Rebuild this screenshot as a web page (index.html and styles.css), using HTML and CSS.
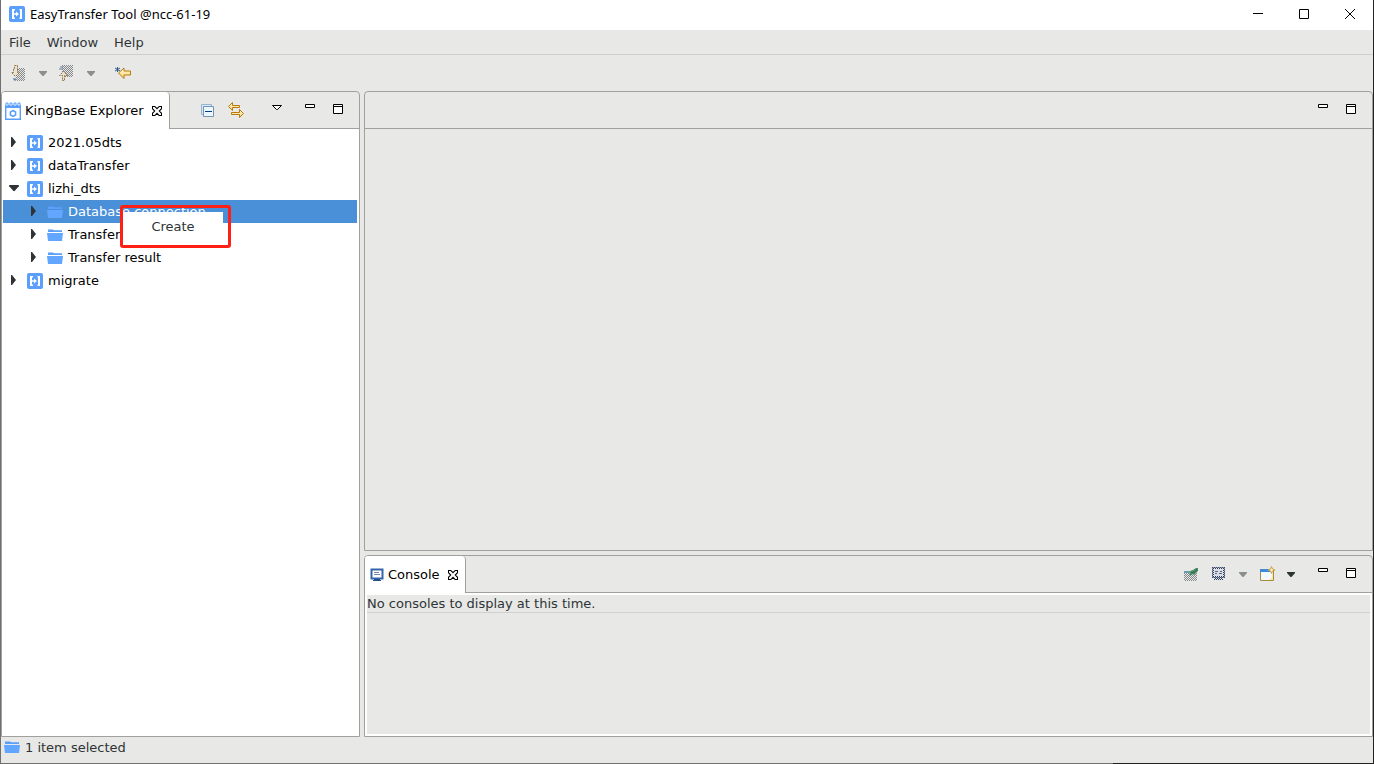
FILE: index.html
```html
<!DOCTYPE html>
<html lang="en">
<head>
<meta charset="utf-8">
<title>EasyTransfer Tool @ncc-61-19</title>
<link rel="stylesheet" href="styles.css">
</head>
<body>
<svg class="defs" aria-hidden="true">
  <defs>
    <pattern id="dither" width="2" height="2" patternUnits="userSpaceOnUse"><path d="M0 0h1v1H0zM1 1h1v1H1z" fill="#85888c"/></pattern>
    <pattern id="dither-navy" width="2" height="2" patternUnits="userSpaceOnUse"><path d="M0 0h1v1H0zM1 1h1v1H1z" fill="#2b3c66"/></pattern>
    <linearGradient id="gold" x2="0" y2="1"><stop stop-color="#fffbe0"/><stop offset="1" stop-color="#ffd466"/></linearGradient>
    <symbol id="app" viewBox="0 0 16 16">
      <rect width="16" height="16" rx="2" fill="#5a9ffb"/>
      <path d="M3 3h3v1.500H5v7h1V13H3zM13 3h-2.500v1.500h.5v7h-.5V13H13z" fill="#fff"/>
      <path d="M5 7.200h2V5.500L10 8l-3 2.500V8.800H5z" fill="#fff"/>
    </symbol>
    <symbol id="folder" viewBox="0 0 16 16">
      <path d="M1 2.500h5l1 .8h8V5H1z" fill="#5a9ffb"/>
      <path d="M0 6h16l-1 8H1z" fill="#62a6ff"/>
    </symbol>
    <symbol id="right" viewBox="0 0 5 10"><path d="M0 0h1l4 5-4 5H0z" fill="#2e3436"/></symbol>
    <symbol id="down" viewBox="0 0 8 5"><path d="M0 0h8v1L4.500 5h-1L0 1z" fill="currentColor"/></symbol>
    <symbol id="x" viewBox="0 0 11 11"><path d="M.5.5h2.500l2.500 2.500L8 .5h2.500V3L8 5.500 10.500 8v2.500H8L5.500 8 3 10.500H.5V8L3 5.500.5 3z" fill="#fff" stroke="#000" stroke-width="1.200"/></symbol>
    <symbol id="min" viewBox="0 0 16 16"><path d="M3.500 2.500h9v3h-9z" fill="#fff" stroke="#000"/></symbol>
    <symbol id="max" viewBox="0 0 16 16"><path d="M3.500 2.500h9v9h-9zM4 4.500h8" fill="#fff" stroke="#000"/></symbol>
    <symbol id="viewmenu" viewBox="0 0 16 16"><path d="M3.500 3.500h9l-4 4h-1z" fill="#fff" stroke="#000"/></symbol>
    <symbol id="explorer" viewBox="0 0 16 18">
      <path d="M.7 5h14.600v12.300H.7z" fill="#fff" stroke="#5a9ffb" stroke-width="1.400"/>
      <path d="M0 3h16v3H0z" fill="#5a9ffb"/>
      <path d="M1 3.500V1h2v3M5 3.500V1h2v3M9 3.500V1h2v3M13 3.500V1h2v3" fill="#fff" stroke="#5a9ffb"/>
      <path d="M8 8.500l2.600 1.500v3L8 14.500 5.400 13v-3z" fill="#fff" stroke="#5a9ffb" stroke-width="1.500"/>
    </symbol>
    <symbol id="collapse" viewBox="0 0 16 16">
      <path d="M1.500 2.500h10v10h-10z" fill="#d8eaf5" stroke="#98b5cf"/>
      <path d="M3.500 4.500h10v10h-10z" fill="#eaf7ff" stroke="#7890b2"/>
      <path d="M5 9.500h7" stroke="#003f86"/>
    </symbol>
    <symbol id="link" viewBox="0 0 16 16">
      <path d="M.5 4.500l4-4v3h7v2h-7v3z" fill="url(#gold)" stroke="#b87912"/>
      <path d="M15.500 11.500l-4-4v3h-8v2h8v3z" fill="url(#gold)" stroke="#b87912"/>
    </symbol>
    <symbol id="nextnote" viewBox="0 0 16 16">
      <path d="M6 3h9v13H6z" fill="url(#dither)"/>
      <path d="M4.500.5h3v7h2l-4 4-4-4h2v-4h1z" fill="#e8e3d6" stroke="#98743c" stroke-dasharray="2 1"/>
      <path d="M3 14h3M4 15h2" stroke="#416a9d"/>
    </symbol>
    <symbol id="prevnote" viewBox="0 0 16 16">
      <path d="M4 0h11v12H4z" fill="url(#dither)"/>
      <path d="M4.500 14.500v-4h-3l4-4 4 4h-3v5h-2z" fill="#e8e3d6" stroke="#98743c" stroke-dasharray="2 1"/>
      <path d="M2 2h3M1 4h4" stroke="#6681a5"/>
    </symbol>
    <symbol id="lastedit" viewBox="0 0 16 16">
      <path d="M3.500 8l5.500-5v3h6.500v4H9v3.500z" fill="url(#gold)" stroke="#b87912"/>
      <path d="M2.500 2v5M0 3l5 3M0 6l5-3" stroke="#315b87"/>
    </symbol>
    <symbol id="console" viewBox="0 0 14 14">
      <path d="M1.500 1.500h11v9h-11z" fill="#fff" stroke="#3564aa" stroke-width="2"/>
      <path d="M4 4.500h5M4 6.500h6" stroke="#7486ab"/>
      <path d="M4 11h6v1h1v1H3v-1h1z" fill="#244f8e"/>
    </symbol>
    <symbol id="pin" viewBox="0 0 16 16">
      <path d="M1 5h13v10H1z" fill="url(#dither)"/>
      <path d="M1 5h8v2H1z" fill="#6b9cad"/>
      <path d="M6 8l2-2-1-1 3-1 3-2h2v3l-2 2-2 2-1-1-3 2z" fill="#4f8867"/>
      <path d="M8 6l3 1 3-4" fill="none" stroke="#28764c"/>
    </symbol>
    <symbol id="display" viewBox="0 0 16 16">
      <path d="M1 1h13v11H1z" fill="url(#dither-navy)"/>
      <path d="M3 3h9v7H3z" fill="#d9dce4"/>
      <path d="M1.500 1.500h12v10h-12z" fill="none" stroke="#4d5b7c" stroke-opacity=".6"/>
      <path d="M4 5.500h3M9 5.500h2M4 7.500h2M8 7.500h3" stroke="#5c6780"/>
      <path d="M3 12h9v2H3z" fill="url(#dither-navy)"/>
    </symbol>
    <symbol id="newconsole" viewBox="0 0 16 16">
      <path d="M1.500 3.500h13v11h-13z" fill="#f1faff" stroke="#aa8a3d"/>
      <path d="M1 3h11v3H1z" fill="#3f8bd6"/>
      <path d="M13 7v3q0 4-5 4h6V7z" fill="#fbe6a0"/>
      <path d="M12.500.5l1 2.500 2.500 1-2.500 1-1 2.500-1-2.500-2.500-1 2.500-1z" fill="#fff0b8" stroke="#c9a04b"/>
    </symbol>
  </defs>
</svg>

<div class="window">
  <header class="titlebar">
    <svg class="icon"><use href="#app"/></svg>
    <h1 class="title">EasyTransfer Tool @ncc-61-19</h1>
    <div class="controls">
      <button class="control" aria-label="Minimize"><svg viewBox="0 0 12 12"><path d="M1 5.500h10"/></svg></button>
      <button class="control" aria-label="Maximize"><svg viewBox="0 0 12 12"><path d="M1.500 1.500h9v9h-9z"/></svg></button>
      <button class="control" aria-label="Close"><svg viewBox="0 0 12 12"><path d="M1 1l10 10M11 1L1 11"/></svg></button>
    </div>
  </header>

  <nav class="menubar" aria-label="Main menu">
    <button>File</button><button>Window</button><button>Help</button>
  </nav>

  <div class="toolbar">
    <div class="split">
      <button aria-label="Next annotation" disabled><svg class="icon"><use href="#nextnote"/></svg></button>
      <button class="muted" aria-label="Next annotation options" disabled><svg class="caret"><use href="#down"/></svg></button>
    </div>
    <div class="split">
      <button aria-label="Previous annotation" disabled><svg class="icon"><use href="#prevnote"/></svg></button>
      <button class="muted" aria-label="Previous annotation options" disabled><svg class="caret"><use href="#down"/></svg></button>
    </div>
    <button class="last-edit" aria-label="Last edit location"><svg class="icon"><use href="#lastedit"/></svg></button>
  </div>

  <main class="workbench">
    <section class="panel explorer" aria-label="KingBase Explorer">
      <div class="panel-head">
        <div class="tab explorer-tab">
          <svg class="explorer-icon"><use href="#explorer"/></svg>
          <h2>KingBase Explorer</h2>
          <button aria-label="Close KingBase Explorer"><svg class="close"><use href="#x"/></svg></button>
        </div>
        <div class="actions">
          <button aria-label="Collapse all"><svg class="icon"><use href="#collapse"/></svg></button>
          <button aria-label="Link with editor"><svg class="icon"><use href="#link"/></svg></button>
          <button class="view-menu" aria-label="View menu"><svg class="icon"><use href="#viewmenu"/></svg></button>
          <span class="sizing">
            <button aria-label="Minimize"><svg class="icon"><use href="#min"/></svg></button>
            <button aria-label="Maximize"><svg class="icon"><use href="#max"/></svg></button>
          </span>
        </div>
      </div>
      <ul class="tree" role="tree">
        <li role="treeitem" aria-expanded="false"><div class="row"><span class="twisty"><svg class="right"><use href="#right"/></svg></span><svg class="icon"><use href="#app"/></svg><span>2021.05dts</span></div></li>
        <li role="treeitem" aria-expanded="false"><div class="row"><span class="twisty"><svg class="right"><use href="#right"/></svg></span><svg class="icon"><use href="#app"/></svg><span>dataTransfer</span></div></li>
        <li role="treeitem" aria-expanded="true">
          <div class="row"><span class="twisty"><svg class="down"><use href="#down"/></svg></span><svg class="icon"><use href="#app"/></svg><span>lizhi_dts</span></div>
          <ul role="group">
            <li class="anchor" role="treeitem" aria-selected="true">
              <div class="row selected"><span class="twisty"><svg class="right"><use href="#right"/></svg></span><svg class="icon"><use href="#folder"/></svg><span>Database connection</span></div>
              <div class="popup" role="menu"><button role="menuitem">Create</button></div>
            </li>
            <li role="treeitem" aria-expanded="false"><div class="row"><span class="twisty"><svg class="right"><use href="#right"/></svg></span><svg class="icon"><use href="#folder"/></svg><span>Transfer</span></div></li>
            <li role="treeitem" aria-expanded="false"><div class="row"><span class="twisty"><svg class="right"><use href="#right"/></svg></span><svg class="icon"><use href="#folder"/></svg><span>Transfer result</span></div></li>
          </ul>
        </li>
        <li role="treeitem" aria-expanded="false"><div class="row"><span class="twisty"><svg class="right"><use href="#right"/></svg></span><svg class="icon"><use href="#app"/></svg><span>migrate</span></div></li>
      </ul>
    </section>

    <div class="main-column">
      <section class="panel editor" aria-label="Editor area">
        <div class="panel-head">
          <div class="actions">
            <span class="sizing">
              <button aria-label="Minimize"><svg class="icon"><use href="#min"/></svg></button>
              <button aria-label="Maximize"><svg class="icon"><use href="#max"/></svg></button>
            </span>
          </div>
        </div>
      </section>
      <section class="panel console" aria-label="Console">
        <div class="panel-head">
          <div class="tab console-tab">
            <svg class="console-icon"><use href="#console"/></svg>
            <h2>Console</h2>
            <button aria-label="Close Console"><svg class="close"><use href="#x"/></svg></button>
          </div>
          <div class="actions">
            <button aria-label="Pin console" disabled><svg class="icon"><use href="#pin"/></svg></button>
            <button aria-label="Display selected console" disabled><svg class="icon"><use href="#display"/></svg></button>
            <button class="muted" aria-label="Display options" disabled><svg class="caret"><use href="#down"/></svg></button>
            <button aria-label="Open console"><svg class="icon"><use href="#newconsole"/></svg></button>
            <button aria-label="Open console options"><svg class="caret"><use href="#down"/></svg></button>
            <span class="sizing">
              <button aria-label="Minimize"><svg class="icon"><use href="#min"/></svg></button>
              <button aria-label="Maximize"><svg class="icon"><use href="#max"/></svg></button>
            </span>
          </div>
        </div>
        <div class="console-body"><p>No consoles to display at this time.</p></div>
      </section>
    </div>
  </main>

  <footer class="status"><svg class="icon"><use href="#folder"/></svg><span>1 item selected</span></footer>
</div>
</body>
</html>
```
FILE: styles.css
```css
* { box-sizing: border-box; }

body {
  margin: 0;
  color: #2e3436;
  font: 13px/18px "DejaVu Sans", sans-serif;
}

h1, h2, p, ul { margin: 0; padding: 0; font: inherit; }
ul { list-style: none; }
svg { display: block; flex: none; }

button {
  display: block;
  padding: 0;
  border: 0;
  background: none;
  color: inherit;
  font: inherit;
}

.defs { position: absolute; width: 0; height: 0; }
.icon { width: 16px; height: 16px; }
.caret { width: 8px; height: 5px; }
.muted { color: #8b8e8f; }

.window {
  display: flex;
  flex-direction: column;
  height: 100vh;
  padding: 0 1px 1px;
  background: linear-gradient(to right, #707070 81%, #222 81%);
}

.titlebar {
  display: flex;
  align-items: center;
  gap: 5px;
  height: 30px;
  padding: 0 0 2px 8px;
  background: #fff;
  color: #000;
}
.title { font: 13px/28px "Noto Sans", sans-serif; }
.controls { display: flex; margin-left: auto; }
.control {
  display: flex;
  align-items: center;
  justify-content: center;
  width: 46px;
  height: 28px;
}
.control svg { width: 12px; height: 12px; fill: none; stroke: #000; }

.menubar {
  display: flex;
  align-items: center;
  gap: 16px;
  height: 25px;
  padding: 1px 0 0 8px;
  border-bottom: 1px solid #cfcfcd;
  background: #e8e8e6;
}

.toolbar {
  display: flex;
  align-items: center;
  gap: 11px;
  height: 36px;
  padding-left: 9px;
  background: #e8e8e6;
}
.split { display: flex; align-items: center; gap: 13px; }
.last-edit { margin-left: 9px; }

.workbench {
  display: flex;
  flex: 1;
  gap: 4px;
  min-height: 0;
  background: #e8e8e6;
}
.explorer { flex: 0 0 359px; }
.main-column {
  display: flex;
  flex: 1;
  flex-direction: column;
  gap: 4px;
  min-width: 0;
}
.editor { flex: 1; }
.console { flex: 0 0 182px; }

.panel {
  display: flex;
  flex-direction: column;
  border: 1px solid #a0a09c;
  border-radius: 4px 4px 0 0;
  background: #e8e8e6;
}
.panel-head {
  display: flex;
  flex: none;
  align-items: stretch;
  height: 37px;
  box-shadow: inset 0 -1px #a0a09c;
}
.tab {
  display: flex;
  align-items: center;
  gap: 4px;
  padding-right: 6px;
  border-right: 1px solid #a0a09c;
  border-radius: 3px 4px 0 0;
  background: #fff;
  color: #000;
}
.tab button { margin-left: 4px; }
.explorer-tab { padding-left: 3px; }
.console-tab { padding-left: 5px; }
.explorer-icon { width: 16px; height: 18px; }
.console-icon { width: 14px; height: 14px; }
.close { width: 10px; height: 10px; }
.tab { padding-right: 7px; }

.actions {
  display: flex;
  align-items: center;
  gap: 12px;
  margin-left: auto;
  padding: 0 13px 1px 0;
}
.view-menu { margin-left: 13px; }
.explorer .sizing { margin-left: 5px; }
.sizing { display: flex; gap: 12px; margin-left: 8px; }

.tree {
  flex: 1;
  padding: 2px 2px 0 1px;
  background: #fff;
  color: #000;
}
.row {
  display: flex;
  align-items: center;
  gap: 5px;
  height: 23px;
  padding-left: 5px;
}
.tree ul .row { padding-left: 25px; }
.twisty {
  display: flex;
  align-items: center;
  justify-content: center;
  width: 14px;
  padding: 0 3px 1px 0;
}
.right { width: 5px; height: 10px; }
.down { width: 10px; height: 6px; color: #2e3436; }
.tree .selected { background: #4a90d9; color: #fff; }

.anchor { position: relative; }
.popup {
  position: absolute;
  top: 5px;
  left: 117px;
  width: 111px;
  height: 43px;
  padding-top: 4px;
  border: 3px solid #fe2015;
  border-radius: 3px;
}
.popup button {
  width: 100px;
  height: 33px;
  padding-bottom: 4px;
  background: #fff;
  color: #2e3436;
}

.console-body {
  flex: 1;
  border: 2px solid #fff;
}
.console-body p { border-bottom: 1px solid #d0d0ce; line-height: 17px; }

.status {
  display: flex;
  align-items: flex-start;
  gap: 5px;
  height: 26px;
  padding: 2px 3px;
  background: #e8e8e6;
}
```
